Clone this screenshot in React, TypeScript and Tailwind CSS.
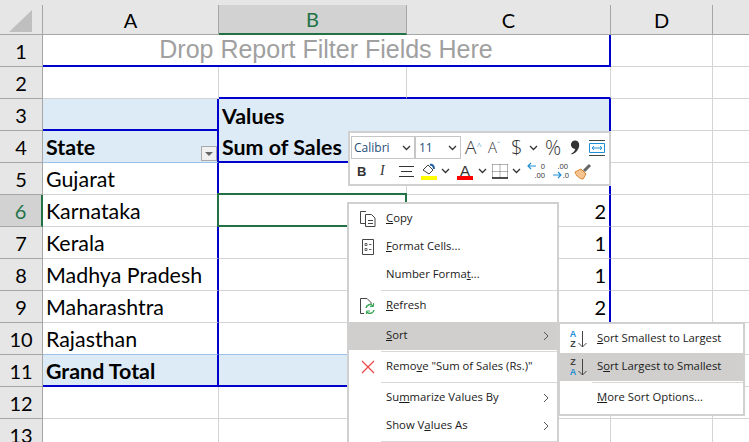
import type { ReactNode } from "react";

const CELL = "border-r border-b border-[#d4d4d4]";
const HEAD = "flex items-center justify-center text-[20px] border-r border-b border-[#a6a6a6]";
const HEAD_OFF = HEAD + " bg-[#e6e6e6] text-black";
const SHADED = "bg-[#ddebf7]";
const BLUE_R = "border-r-2 border-r-[#0000cc]";
const BLUE_B = "border-b-2 border-b-[#0000cc]";

function Chev({ className = "" }: { className?: string }) {
  return (
    <svg width="9" height="6" viewBox="0 0 9 6" className={className}>
      <path d="M1 1l3.5 3.5L8 1" fill="none" stroke="#333" strokeWidth="1.3" />
    </svg>
  );
}

function Arrow() {
  return (
    <svg width="6" height="10" viewBox="0 0 6 10" className="absolute right-[8px] top-1/2 -translate-y-1/2">
      <path d="M1 1l4 4-4 4" fill="none" stroke="#555" strokeWidth="1" />
    </svg>
  );
}

function Row({ icon, children, arrow, hot }: { icon?: ReactNode; children: ReactNode; arrow?: boolean; hot?: boolean }) {
  return (
    <div className={`relative flex h-[28px] items-center ${hot ? "bg-[#d0cfcd]" : ""}`}>
      <div className="flex w-[37px] shrink-0 justify-center">{icon}</div>
      <span className="whitespace-nowrap pb-[2px] text-[11.3px] leading-none text-[#1a1a1a]">{children}</span>
      {arrow && <Arrow />}
    </div>
  );
}

function Sep() {
  return <div className="my-[1px] ml-[32px] h-[1px] bg-[#d8d8d8]" />;
}

function Toolbar() {
  return (
    <div className="absolute left-[348px] top-[131px] z-20 h-[55px] w-[263px] border-2 border-[#d0d0d0] bg-white font-['Open_Sans',sans-serif] text-[#333]">
      <div className="flex h-[27px] items-center pl-[1px] pt-[2px]">
        <div className="flex h-[23px] w-[64px] items-center justify-between border border-[#c6c6c6] pl-[2px] pr-[3px] text-[12px] text-[#1f4e79]">
          Calibri <Chev />
        </div>
        <div className="flex h-[23px] w-[46px] items-center justify-between border border-[#c6c6c6] pl-[3px] pr-[3px] text-[12px] text-[#1f4e79]">
          11 <Chev />
        </div>
        <span className="ml-[4px] w-[23px] text-[19px] font-light leading-none">
          A<sup className="text-[9px] text-[#1f7fc4]">^</sup>
        </span>
        <span className="w-[23px] text-[15px] font-light leading-none">
          A<sup className="text-[9px] text-[#1f7fc4]">ˇ</sup>
        </span>
        <span className="w-[18px] text-[20px] font-light leading-none">$</span>
        <Chev className="mr-[7px]" />
        <span className="w-[25px] text-[20px] font-light leading-none">%</span>
        <svg width="10" height="15" viewBox="0 0 10 15" className="mr-[9px]">
          <path d="M5 0.5a4.2 4.2 0 0 1 4.2 4.5c0 4-3 8-7.5 9.5l-0.5-1c2-1 3.6-2.6 4-4.6a4.2 4.2 0 1 1-0.2-8.4z" fill="#333" />
        </svg>
        <svg width="16" height="16" viewBox="0 0 16 16">
          <path d="M0 0.5h16M0 15.5h16" stroke="#444" />
          <path d="M0.5 3.5h15v9h-15z" fill="none" stroke="#1f8fd6" />
          <path d="M3 8h10M5 6L3 8l2 2M11 6l2 2-2 2" fill="none" stroke="#1f8fd6" />
        </svg>
      </div>
      <div className="flex h-[22px] items-center pl-[7px]">
        <span className="w-[23px] font-['Liberation_Sans',sans-serif] text-[13px] font-bold leading-none">B</span>
        <span className="w-[19px] font-['Liberation_Serif',serif] text-[14px] italic leading-none">I</span>
        <svg width="15" height="13" viewBox="0 0 15 13" className="mr-[7px]">
          <path d="M0 1.5h15M2 6.5h11M0 11.5h15" stroke="#333" />
        </svg>
        <svg width="16" height="17" viewBox="0 0 16 17">
          <path d="M2 7l5-5 5 5-4 4z" fill="none" stroke="#444" />
          <path d="M9 2c2-1 4 1 4 4" fill="none" stroke="#1f5fa8" strokeWidth="2" />
          <rect x="0" y="13" width="16" height="4" fill="#ffff00" />
        </svg>
        <Chev className="mx-[4px]" />
        <span className="relative ml-[3px] flex h-[17px] w-[16px] justify-center font-['Liberation_Sans',sans-serif] text-[15px] leading-none">
          A
          <span className="absolute bottom-0 left-0 h-[4px] w-[16px] bg-[#ff0000]" />
        </span>
        <Chev className="mx-[5px]" />
        <svg width="16" height="15" viewBox="0 0 16 15">
          <path d="M0.5 0.5h15M0.5 7.5h15M0.5 0.5v13M8 0.5v13M15.5 0.5v13" fill="none" stroke="#666" strokeDasharray="1 1" />
          <path d="M0 14h16" stroke="#111" strokeWidth="1.5" />
        </svg>
        <Chev className="mx-[4px]" />
        <svg width="19" height="18" viewBox="0 0 19 18" className="ml-[2px]">
          <path d="M9 4H1M4 1L1 4l3 3" fill="none" stroke="#1f8fd6" strokeWidth="1.2" />
          <text x="18" y="7" textAnchor="end" fontSize="7.5" fontFamily="Open Sans" fill="#333">0</text>
          <text x="18" y="16" textAnchor="end" fontSize="7.5" fontFamily="Open Sans" fill="#333">.00</text>
        </svg>
        <svg width="16" height="18" viewBox="0 0 16 18" className="ml-[7px]">
          <text x="15" y="7" textAnchor="end" fontSize="7.5" fontFamily="Open Sans" fill="#333">.00</text>
          <path d="M0 13h8M5 10l3 3-3 3" fill="none" stroke="#1f8fd6" strokeWidth="1.2" />
          <text x="16" y="16" textAnchor="end" fontSize="7.5" fontFamily="Open Sans" fill="#333">.0</text>
        </svg>
        <svg width="18" height="17" viewBox="0 0 18 17" className="ml-[5px]">
          <path d="M1 9l6-3 5 5-3 5c-3 0-7-3-8-7z" fill="#f6c58f" stroke="#d9822b" />
          <path d="M10 8l6-6" stroke="#666" strokeWidth="3" />
        </svg>
      </div>
    </div>
  );
}

function ContextMenu() {
  return (
    <div className="absolute left-[347px] top-[202px] z-20 h-[240px] w-[212px] border-2 border-b-0 border-[#d0d0d0] bg-white pt-[1px] font-['Open_Sans',sans-serif]">
      <Row
        icon={
          <svg width="16" height="16" viewBox="0 0 16 16">
            <path d="M5 12.5H0.5V0.5H6" fill="none" stroke="#444" />
            <path d="M5.5 3.5h6l3.5 3.5v8.5H5.5z" fill="#fff" stroke="#444" />
            <path d="M8 9.5h5M8 12.5h5" stroke="#444" />
          </svg>
        }
      >
        <u>C</u>opy
      </Row>
      <Row
        icon={
          <svg width="12" height="16" viewBox="0 0 12 16">
            <path d="M0.5 0.5h11v15h-11z" fill="none" stroke="#444" />
            <path d="M3 4.5h2v2h-2zM3 9.5h2v2h-2z" fill="none" stroke="#666" />
            <path d="M7 5.5h2.5M7 10.5h2.5" stroke="#666" />
          </svg>
        }
      >
        <u>F</u>ormat Cells...
      </Row>
      <Row>
        Number Forma<u>t</u>...
      </Row>
      <Sep />
      <Row
        icon={
          <svg width="15" height="16" viewBox="0 0 15 16">
            <path d="M4 15.5H0.5V0.5H7l4 4v2" fill="none" stroke="#444" />
            <path d="M6 10a4 4 0 0 1 7-2M14 12a4 4 0 0 1-7 2" fill="none" stroke="#3aa655" strokeWidth="1.5" />
            <path d="M13.5 5v3.5H10M6.5 16v-3H10" fill="none" stroke="#3aa655" />
          </svg>
        }
      >
        <u>R</u>efresh
      </Row>
      <div className="h-[2px]" />
      <Row hot arrow>
        <u>S</u>ort
      </Row>
      <Sep />
      <Row
        icon={
          <svg width="14" height="14" viewBox="0 0 14 14">
            <path d="M1 1l12 12M13 1L1 13" stroke="#ee4444" strokeWidth="1.2" />
          </svg>
        }
      >
        Remo<u>v</u>e "Sum of Sales (Rs.)"
      </Row>
      <Sep />
      <Row arrow>
        Su<u>m</u>marize Values By
      </Row>
      <Row arrow>
        Show V<u>a</u>lues As
      </Row>
      <Sep />
    </div>
  );
}

function SortIcon({ top, bottom, topClass, bottomClass }: { top: string; bottom: string; topClass: string; bottomClass: string }) {
  return (
    <span className="flex items-center gap-[2px]">
      <span className="flex flex-col text-center font-['Liberation_Sans',sans-serif] text-[9px] font-bold leading-[10.5px]">
        <span className={topClass}>{top}</span>
        <span className={bottomClass}>{bottom}</span>
      </span>
      <svg width="9" height="17" viewBox="0 0 9 17">
        <path d="M4.5 0v16M0.5 12l4 4 4-4" fill="none" stroke="#444" />
      </svg>
    </span>
  );
}

function SubMenu() {
  return (
    <div className="absolute left-[558px] top-[322px] z-30 w-[187px] border-2 border-[#d0d0d0] bg-white pb-[2px] pt-[1px] font-['Open_Sans',sans-serif]">
      <Row icon={<SortIcon top="A" bottom="Z" topClass="text-[#1f8fd6]" bottomClass="text-[#444]" />}>
        <u>S</u>ort Smallest to Largest
      </Row>
      <Row hot icon={<SortIcon top="Z" bottom="A" topClass="text-[#444]" bottomClass="text-[#1f8fd6]" />}>
        S<u>o</u>rt Largest to Smallest
      </Row>
      <Sep />
      <Row>
        <u>M</u>ore Sort Options...
      </Row>
    </div>
  );
}

const states: { n: number; name: string; val?: string }[] = [
  { n: 5, name: "Gujarat" },
  { n: 6, name: "Karnataka", val: "2" },
  { n: 7, name: "Kerala", val: "1" },
  { n: 8, name: "Madhya Pradesh", val: "1" },
  { n: 9, name: "Maharashtra", val: "2" },
  { n: 10, name: "Rajasthan" },
];

export default function App() {
  return (
    <div className="relative h-[442px] w-[749px] overflow-hidden bg-white font-['Lato',sans-serif] text-[21.4px] text-black">
      <div className="h-[5px] bg-[#e6e6e6]" />
      <div className="grid grid-cols-[43px_176px_188px_204px_102px_36px] grid-rows-[30px_repeat(13,32px)]">
        {/* column headers */}
        <div className={HEAD_OFF + " items-end"}>
          <svg width="23" height="22" viewBox="0 0 23 22" className="mb-[2px] ml-[-1px]">
            <path d="M23 0v22H0z" fill="#bfbfbf" />
          </svg>
        </div>
        <div className={HEAD_OFF}>A</div>
        <div className={HEAD + " border-b-2 border-b-[#217346] bg-[#d2d2d2] text-[#217346]"}>B</div>
        <div className={HEAD_OFF}>C</div>
        <div className={HEAD_OFF}>D</div>
        <div className={HEAD_OFF + " border-r-0"} />

        {/* row 1, report filter drop zone */}
        <div className={HEAD_OFF}>1</div>
        <div className={`col-span-3 flex items-center justify-center font-['Liberation_Sans',sans-serif] text-[25px] text-[#a0a0a0] ${BLUE_R} ${BLUE_B}`}>
          Drop Report Filter Fields Here
        </div>
        <div className={CELL} />
        <div className={CELL + " border-r-0"} />

        {/* row 2 */}
        <div className={HEAD_OFF}>2</div>
        <div className={CELL} />
        <div className={`${CELL} ${BLUE_B}`} />
        <div className={`${CELL} ${BLUE_B}`} />
        <div className={CELL} />
        <div className={CELL + " border-r-0"} />

        {/* row 3 */}
        <div className={HEAD_OFF}>3</div>
        <div className={`${SHADED} ${BLUE_R} ${BLUE_B}`} />
        <div className={`${SHADED} flex items-center pl-[3px] pt-[2px] font-bold`}>Values</div>
        <div className={`${SHADED} ${BLUE_R}`} />
        <div className={CELL} />
        <div className={CELL + " border-r-0"} />

        {/* row 4 */}
        <div className={HEAD_OFF}>4</div>
        <div className={`${SHADED} ${BLUE_R} relative flex items-center border-b border-b-[#9bc2e6] pl-[3px] pt-[2px] font-bold`}>
          State
          <span className="absolute bottom-[1px] right-0 flex h-[15px] w-[16px] items-center justify-center border border-[#a8a8a8] bg-[#f0f0f0]">
            <span className="h-0 w-0 border-x-[4px] border-t-[4px] border-x-transparent border-t-[#666]" />
          </span>
        </div>
        <div className={`${SHADED} ${BLUE_B} flex items-center pl-[3px] pt-[2px] font-bold`}>Sum of Sales</div>
        <div className={`${SHADED} ${BLUE_R} ${BLUE_B}`} />
        <div className={CELL} />
        <div className={CELL + " border-r-0"} />

        {/* rows 5-10 */}
        {states.map((s) => (
          <div key={s.n} className="contents">
            <div className={s.n === 6 ? HEAD + " border-r-2 border-r-[#217346] bg-[#d2d2d2] text-[#217346]" : HEAD_OFF}>{s.n}</div>
            <div className={`${CELL} ${BLUE_R} flex items-center pl-[3px] pt-[2px] ${s.n === 10 ? "border-b-[#9bc2e6]" : ""}`}>{s.name}</div>
            <div className={`${CELL} relative ${s.n === 10 ? "border-b-[#9bc2e6]" : ""}`}>
              {s.n === 6 && <div className="absolute -left-[2px] -top-[2px] z-10 h-[34px] w-[190px] border-2 border-[#217346]" />}
            </div>
            <div className={`${CELL} ${BLUE_R} flex items-center justify-end pr-[3px] text-[20px] ${s.n === 10 ? "border-b-[#9bc2e6]" : ""}`}>{s.val}</div>
            <div className={CELL} />
            <div className={CELL + " border-r-0"} />
          </div>
        ))}

        {/* row 11 */}
        <div className={HEAD_OFF}>11</div>
        <div className={`${SHADED} ${BLUE_R} ${BLUE_B} flex items-center pl-[3px] pt-[2px] font-bold`}>Grand Total</div>
        <div className={`${SHADED} ${BLUE_B}`} />
        <div className={`${SHADED} ${BLUE_R} ${BLUE_B}`} />
        <div className={CELL} />
        <div className={CELL + " border-r-0"} />

        {/* rows 12, 13 */}
        {[12, 13].map((n) => (
          <div key={n} className="contents">
            <div className={HEAD_OFF}>{n}</div>
            <div className={CELL} />
            <div className={CELL} />
            <div className={CELL} />
            <div className={CELL} />
            <div className={CELL + " border-r-0"} />
          </div>
        ))}
      </div>
      <Toolbar />
      <ContextMenu />
      <SubMenu />
    </div>
  );
}
